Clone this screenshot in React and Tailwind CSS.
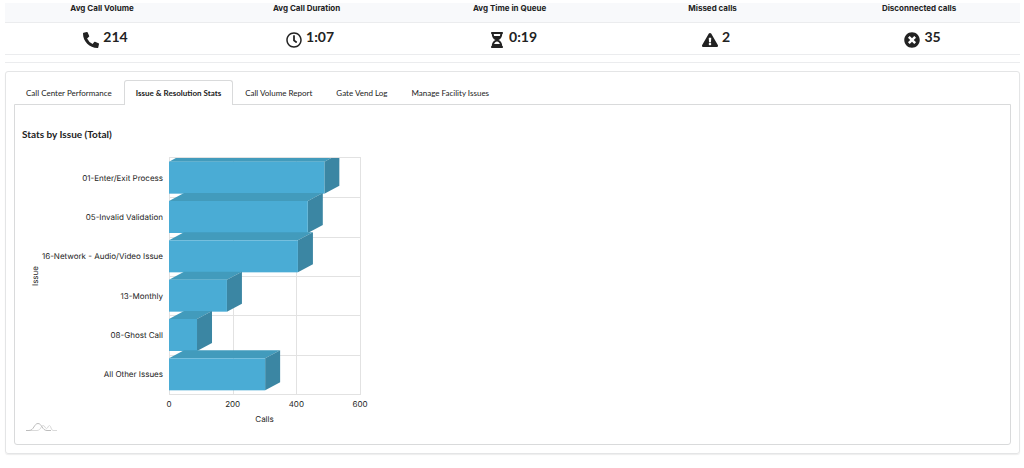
import { useState } from "react";
import {
  FaPhoneAlt,
  FaRegClock,
  FaHourglassHalf,
  FaExclamationTriangle,
  FaTimesCircle,
} from "react-icons/fa";

const metrics = [
  { label: "Avg Call Volume", value: "214", Icon: FaPhoneAlt },
  { label: "Avg Call Duration", value: "1:07", Icon: FaRegClock },
  { label: "Avg Time in Queue", value: "0:19", Icon: FaHourglassHalf },
  { label: "Missed calls", value: "2", Icon: FaExclamationTriangle },
  { label: "Disconnected calls", value: "35", Icon: FaTimesCircle },
];

const tabs = [
  "Call Center Performance",
  "Issue & Resolution Stats",
  "Call Volume Report",
  "Gate Vend Log",
  "Manage Facility Issues",
];

const issues = [
  { name: "01-Enter/Exit Process", calls: 488 },
  { name: "05-Invalid Validation", calls: 436 },
  { name: "16-Network - Audio/Video Issue", calls: 405 },
  { name: "13-Monthly", calls: 182 },
  { name: "08-Ghost Call", calls: 88 },
  { name: "All Other Issues", calls: 302 },
];

const PLOT = { left: 147, top: 8, width: 191, height: 236, max: 600 };
const DEPTH = { x: 15, y: 8 };
const BAR = 32;

function IssueChart() {
  const pitch = PLOT.height / issues.length;
  const right = PLOT.left + PLOT.width;
  const bottom = PLOT.top + PLOT.height;
  const scale = (v) => PLOT.left + (v / PLOT.max) * PLOT.width;

  return (
    <svg
      width="350"
      height="286"
      viewBox="0 0 350 286"
      role="img"
      aria-label="Stats by Issue (Total)"
      textRendering="geometricPrecision"
      className="block font-['Inter',sans-serif] text-[8px]"
      fill="#222"
    >
      <defs>
        <clipPath id="plot">
          <rect x={PLOT.left} y={PLOT.top} width={PLOT.width} height={PLOT.height} />
        </clipPath>
      </defs>

      <g stroke="#e2e2e2" strokeWidth="1">
        {[0, 1, 2, 3, 4, 5, 6].map((i) => {
          const y = Math.round(PLOT.top + i * pitch) + (i === 0 ? -0.5 : 0.5);
          return <line key={i} x1={PLOT.left} x2={right} y1={y} y2={y} />;
        })}
        {[0, 200, 400, 600].map((v) => {
          const x = Math.round(scale(v)) + 0.5;
          return <line key={v} x1={x} x2={x} y1={PLOT.top - 1} y2={bottom + 1} />;
        })}
      </g>

      <g clipPath="url(#plot)">
        {issues.map(({ name, calls }, i) => {
          const x0 = PLOT.left;
          const x1 = scale(calls);
          const y0 = PLOT.top + (i + 0.5) * pitch - BAR / 2;
          const y1 = y0 + BAR;
          return (
            <g key={name}>
              <polygon
                fill="#429bbc"
                points={`${x0},${y0} ${x0 + DEPTH.x},${y0 - DEPTH.y} ${x1 + DEPTH.x},${y0 - DEPTH.y} ${x1},${y0}`}
              />
              <polygon
                fill="#3b86a3"
                points={`${x1},${y0} ${x1 + DEPTH.x},${y0 - DEPTH.y} ${x1 + DEPTH.x},${y1 - DEPTH.y} ${x1},${y1}`}
              />
              <rect x={x0} y={y0} width={x1 - x0} height={BAR} fill="#4aacd5" />
            </g>
          );
        })}
      </g>

      {issues.map(({ name }, i) => (
        <text key={name} x={PLOT.left - 6} y={PLOT.top + (i + 0.5) * pitch + 3} textAnchor="end">
          {name}
        </text>
      ))}
      {[0, 200, 400, 600].map((v) => (
        <text key={v} x={scale(v)} y={bottom + 13} textAnchor="middle">
          {v}
        </text>
      ))}
      <text x={PLOT.left + PLOT.width / 2} y={bottom + 28} textAnchor="middle">
        Calls
      </text>
      <text transform="translate(16 126) rotate(-90)" textAnchor="middle">
        Issue
      </text>

      <g fill="none" strokeWidth="1">
        <path stroke="#dadada" d="M4 280.500H15C19 280.500 19 275.500 21 275.500S23 278.500 24.500 278.500S26 275.500 27.500 275.500S29 280.500 31 280.500H35" />
        <path stroke="#bdbdbd" d="M4 280.500H7C12 280.500 12 273.500 16 273.500S20 280.500 25 280.500H29" />
      </g>
    </svg>
  );
}

export default function App() {
  const [active, setActive] = useState(1);

  return (
    <main className="bg-white pt-[3px] pr-1 pb-4 pl-[5px] font-['Lato',sans-serif] text-[#222]">
      <table className="w-full table-fixed border-collapse">
        <colgroup>
          <col className="w-[196px]" />
          <col className="w-[21%]" />
          <col className="w-[19%]" />
          <col className="w-[21%]" />
          <col />
        </colgroup>
        <thead>
          <tr className="border-b border-[#ebecee] bg-[#f8f9fb]">
            {metrics.map(({ label }) => (
              <th
                key={label}
                scope="col"
                className="h-[19px] pt-0 pr-0.5 pb-[7px] pl-0 text-center font-['Inter',sans-serif] text-[8px] leading-[11px] font-bold"
              >
                {label}
              </th>
            ))}
          </tr>
        </thead>
        <tbody>
          <tr className="border-b border-[#ebecee]">
            {metrics.map(({ label, value, Icon }) => (
              <td key={label} className="h-8 py-0 pr-0 pl-[5px]">
                <div className="flex items-start justify-center gap-1">
                  <Icon className="mt-1 h-4 w-auto" aria-hidden="true" />
                  <span className="text-[14px] leading-[18px] font-bold">{value}</span>
                </div>
              </td>
            ))}
          </tr>
        </tbody>
      </table>

      <hr className="mt-[7px] border-[#ebecee]" />

      <section className="mt-2 rounded-[3px] border border-[#e4e5e6] p-2 shadow-[0_1px_1px_rgba(34,36,38,0.08)]">
        <div role="tablist" className="flex">
          {tabs.map((tab, i) => (
            <button
              key={tab}
              type="button"
              role="tab"
              id={`tab-${i}`}
              aria-selected={i === active}
              aria-controls="panel"
              onClick={() => setActive(i)}
              className={
                i === active
                  ? "-mb-px h-[25px] rounded-t-[3px] border border-b-0 border-[#d9dadb] bg-white px-[11px] text-[8px] font-bold"
                  : "h-6 px-3 pt-0.5 text-[8px]"
              }
            >
              {tab}
            </button>
          ))}
        </div>
        <div
          role="tabpanel"
          id="panel"
          aria-labelledby={`tab-${active}`}
          className="min-h-[340px] rounded-b-[3px] border border-[#d9dadb] px-[7px] pt-[21px] pb-2"
        >
          <h2 className="text-[10px] leading-4 font-bold">Stats by Issue (Total)</h2>
          <div className="mt-2">
            <IssueChart />
          </div>
        </div>
      </section>
    </main>
  );
}
